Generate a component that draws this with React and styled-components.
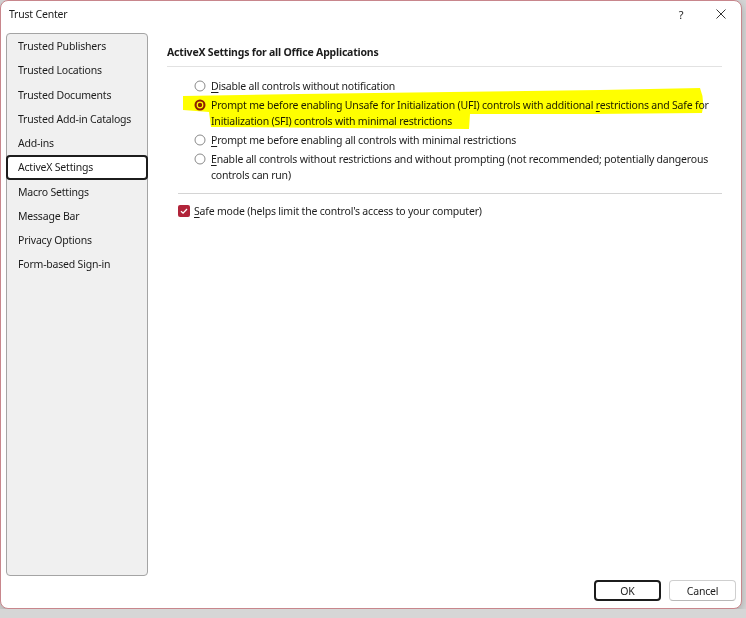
import React from 'react'
import styled, { createGlobalStyle } from 'styled-components'

const GlobalStyle = createGlobalStyle`
  html, body {
    margin: 0;
    padding: 0;
    background: #d6d6d6;
  }
  body {
    font-family: "Noto Sans", "Liberation Sans", sans-serif;
    font-size: 10.5px;
    letter-spacing: -0.2px;
    color: #1c1c1c;
  }
`

const navItems = [
  'Trusted Publishers',
  'Trusted Locations',
  'Trusted Documents',
  'Trusted Add-in Catalogs',
  'Add-ins',
  'ActiveX Settings',
  'Macro Settings',
  'Message Bar',
  'Privacy Options',
  'Form-based Sign-in',
]

const ACCENT = '#b1243a'

function Radio({ checked }) {
  return (
    <RadioBox>
      <svg width="12" height="12" viewBox="0 0 12 12">
        {checked ? (
          <>
            <circle cx="6" cy="6" r="5.5" fill="#8e1d22" />
            <circle cx="6" cy="6" r="3.4" fill="#fff" />
            <circle cx="6" cy="6" r="2.2" fill="#8e1d22" />
          </>
        ) : (
          <circle cx="6" cy="6" r="5" fill="#fff" stroke="#8a8a8a" strokeWidth="1" />
        )}
      </svg>
    </RadioBox>
  )
}

export default function App() {
  return (
    <>
      <GlobalStyle />
      <Window>
        <TitleBar>
          <Title>Trust Center</Title>
          <TitleButtons>
            <TitleButton>?</TitleButton>
            <TitleButton>
              <svg width="10" height="10" viewBox="0 0 10 10">
                <path d="M0.5 0.5 L9.5 9.5 M9.5 0.5 L0.5 9.5" stroke="#333" strokeWidth="1" />
              </svg>
            </TitleButton>
          </TitleButtons>
        </TitleBar>

        <Body>
          <Sidebar>
            {navItems.map((item) => (
              <NavItem key={item} $active={item === 'ActiveX Settings'}>
                {item}
              </NavItem>
            ))}
          </Sidebar>

          <Main>
            <Heading>ActiveX Settings for all Office Applications</Heading>
            <Section>
              <Options>
                <Option>
                  <Radio />
                  <Label>
                    <u>D</u>isable all controls without notification
                  </Label>
                </Option>
                <Option>
                  <Radio checked />
                  <Label>
                    <Line>
                      Prompt me before enabling Unsafe for Initialization (UFI) controls with additional{' '}
                      <u>r</u>estrictions and Safe for
                    </Line>
                    <Line>Initialization (SFI) controls with minimal restrictions</Line>
                  </Label>
                </Option>
                <Option>
                  <Radio />
                  <Label>
                    <u>P</u>rompt me before enabling all controls with minimal restrictions
                  </Label>
                </Option>
                <Option>
                  <Radio />
                  <Label>
                    <Line>
                      <u>E</u>nable all controls without restrictions and without prompting (not recommended; potentially dangerous
                    </Line>
                    <Line>controls can run)</Line>
                  </Label>
                </Option>
              </Options>
              <CheckRow>
                <CheckBox>
                  <svg width="12" height="12" viewBox="0 0 12 12">
                    <rect x="0" y="0" width="12" height="12" rx="2" fill={ACCENT} />
                    <path d="M3 6.2 L5.1 8.2 L9 4" fill="none" stroke="#fff" strokeWidth="1.3" />
                  </svg>
                </CheckBox>
                <Label>
                  <u>S</u>afe mode (helps limit the control's access to your computer)
                </Label>
              </CheckRow>
            </Section>
          </Main>
        </Body>

        <Footer>
          <Button $primary>OK</Button>
          <Button>Cancel</Button>
        </Footer>

        <Highlight width="742" height="609" viewBox="0 0 742 609">
          <path
            d="M183 96 L300 94 L450 92 L600 90 L700 88 Q705 100 702 113 L590 114 L470 114 L469 129 L340 128 L211 127 L209 112 L183 110 Z"
            fill="#ffff00"
          />
        </Highlight>
      </Window>
    </>
  )
}

const Window = styled.div`
  position: relative;
  width: 742px;
  height: 609px;
  box-sizing: border-box;
  background: #fff;
  border: 1px solid #c8868c;
  border-radius: 8px;
  display: flex;
  flex-direction: column;
  box-shadow: 0 3px 8px rgba(0, 0, 0, 0.22);
`

const TitleBar = styled.div`
  height: 32px;
  flex: none;
  display: flex;
  align-items: flex-start;
  padding: 6px 0 0 8px;
  box-sizing: border-box;
`

const Title = styled.div`
  line-height: 14px;
  font-size: 10.5px;
`

const TitleButtons = styled.div`
  margin-left: auto;
  display: flex;
`

const TitleButton = styled.div`
  width: 40px;
  height: 14px;
  display: flex;
  align-items: center;
  justify-content: center;
  font-size: 11px;
  color: #222;
`

const Body = styled.div`
  flex: 1;
  min-height: 0;
  display: flex;
  padding-left: 5px;
`

const Sidebar = styled.div`
  width: 142px;
  flex: none;
  box-sizing: border-box;
  border: 1px solid #a4a4a4;
  border-radius: 4px;
  background: #f0f0f0;
  display: flex;
  flex-direction: column;
`

const NavItem = styled.div`
  height: 24.25px;
  box-sizing: border-box;
  display: flex;
  align-items: center;
  padding-left: ${(p) => (p.$active ? '10px' : '11px')};
  white-space: nowrap;
  ${(p) =>
    p.$active &&
    `
    margin: 0 -1px;
    border: 2px solid #1c1c1c;
    border-radius: 4px;
    background: #fff;
  `}
`

const Main = styled.div`
  flex: 1;
  padding: 0 19px;
`

const Heading = styled.div`
  margin-top: 11px;
  line-height: 16px;
  padding-bottom: 6px;
  font-weight: 700;
  border-bottom: 1px solid #e2e2e2;
`

const Section = styled.div`
  margin-left: 11px;
`

const Options = styled.div`
  display: flex;
  flex-direction: column;
  gap: 3px;
  padding: 11px 0 10px 16px;
  border-bottom: 1px solid #d4d4d4;
`

const Option = styled.div`
  display: flex;
  align-items: flex-start;
`

const RadioBox = styled.div`
  width: 17px;
  flex: none;
  height: 16px;
  display: flex;
  align-items: center;

  svg {
    display: block;
  }
`

const Label = styled.div`
  line-height: 16px;

  u {
    text-decoration: underline;
    text-underline-offset: 1.5px;
    text-decoration-thickness: 1px;
  }
`

const Line = styled.div`
  white-space: nowrap;
`

const CheckRow = styled.div`
  display: flex;
  align-items: flex-start;
  margin-top: 9px;
`

const CheckBox = styled.div`
  width: 16px;
  height: 16px;
  flex: none;
  display: flex;
  align-items: center;

  svg {
    display: block;
  }
`

const Footer = styled.div`
  height: 32px;
  flex: none;
  box-sizing: border-box;
  display: flex;
  justify-content: flex-end;
  align-items: flex-start;
  gap: 8px;
  padding: 4px 5px 0 0;
`

const Button = styled.button`
  width: 67px;
  height: 21px;
  box-sizing: border-box;
  font-family: inherit;
  font-size: 10.5px;
  letter-spacing: inherit;
  color: #1c1c1c;
  background: #fff;
  border-radius: 4px;
  padding: 0;
  border: ${(p) => (p.$primary ? '2px solid #1c1c1c' : '1px solid #cfcfcf')};
  border-bottom-color: ${(p) => (p.$primary ? '#1c1c1c' : '#b8b8b8')};
`

const Highlight = styled.svg`
  position: absolute;
  top: -1px;
  left: -1px;
  pointer-events: none;
  mix-blend-mode: multiply;
`
